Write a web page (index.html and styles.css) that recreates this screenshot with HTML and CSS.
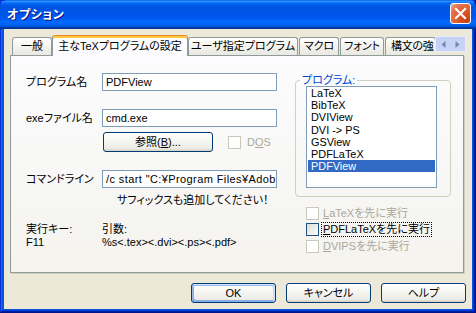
FILE: index.html
```html
<!DOCTYPE html>
<html lang="ja">
<head>
<meta charset="utf-8">
<title>オプション</title>
<link rel="stylesheet" href="styles.css">
</head>
<body>
<div class="window">
  <div class="titlebar">
    <span class="title">オプション</span>
    <span class="close" aria-label="閉じる">
      <svg width="19" height="19" viewBox="0 0 19 19"><path d="M5 5 L14 14 M14 5 L5 14" stroke="#fff" stroke-width="2.2" stroke-linecap="square" fill="none"/></svg>
    </span>
  </div>
  <div class="client">
    <div class="tabs">
      <div class="tab-list">
        <div class="tab tab-general">一般</div>
        <div class="tab tab-selected tab-main">主なTeXプログラムの設定</div>
        <div class="tab tab-user">ユーザ指定プログラム</div>
        <div class="tab tab-macro">マクロ</div>
        <div class="tab tab-font">フォント</div>
        <div class="tab tab-syntax">構文の強</div>
      </div>
      <div class="tab-scroll">
        <span class="scroll-btn"><svg width="5" height="7" viewBox="0 0 5 7"><path d="M4.5 0 L0.5 3.5 L4.5 7 Z" fill="#7489B8"/></svg></span>
        <span class="scroll-btn"><svg width="5" height="7" viewBox="0 0 5 7"><path d="M0.5 0 L4.5 3.5 L0.5 7 Z" fill="#7489B8"/></svg></span>
      </div>
    </div>
    <div class="panel">
      <div class="left">
        <div class="field">
          <span class="label">プログラム名</span>
          <div class="edit">PDFView</div>
        </div>
        <div class="field field-exe">
          <span class="label">exeファイル名</span>
          <div class="edit">cmd.exe</div>
        </div>
        <div class="browse-row">
          <span class="btn btn-browse">参照(<u>B</u>)...</span>
          <span class="check check-dos disabled"><span class="box"></span><span class="check-text">D<u>O</u>S</span></span>
        </div>
        <div class="field field-cmd">
          <span class="label">コマンドライン</span>
          <div class="edit edit-cmd">/c start "C:¥Program Files¥Adob</div>
        </div>
        <div class="hint">サフィックスも追加してください！</div>
        <div class="info">
          <div class="info-key">
            <div>実行キー:</div>
            <div>F11</div>
          </div>
          <div class="info-args">
            <div>引数:</div>
            <div>%s&lt;.tex&gt;&lt;.dvi&gt;&lt;.ps&gt;&lt;.pdf&gt;</div>
          </div>
        </div>
      </div>
      <div class="right">
        <fieldset class="group">
          <legend>プログラム:</legend>
          <ul class="listbox">
            <li>LaTeX</li>
            <li>BibTeX</li>
            <li>DVIView</li>
            <li>DVI -&gt; PS</li>
            <li>GSView</li>
            <li>PDFLaTeX</li>
            <li class="selected">PDFView</li>
          </ul>
        </fieldset>
        <div class="checks">
          <div class="check disabled"><span class="box"></span><span class="check-text"><u>L</u>aTeXを先に実行</span></div>
          <div class="check"><span class="box box-enabled"></span><span class="check-text focus"><u>P</u>DFLaTeXを先に実行</span></div>
          <div class="check disabled"><span class="box"></span><span class="check-text"><u>D</u>VIPSを先に実行</span></div>
        </div>
      </div>
    </div>
    <div class="buttons">
      <span class="btn btn-dialog btn-default">OK</span>
      <span class="btn btn-dialog">キャンセル</span>
      <span class="btn btn-dialog">ヘルプ</span>
    </div>
  </div>
</div>
</body>
</html>
```

FILE: styles.css
```css
html, body {
  margin: 0;
  padding: 0;
}

body {
  width: 476px;
  height: 313px;
  overflow: hidden;
  background: #0855DD;
}

.window {
  width: 476px;
  height: 313px;
  display: flex;
  flex-direction: column;
  background: #0855DD;
  box-shadow: inset -1px -1px #00138C, inset 1px 1px #0831D9, inset -2px -2px #001EA0, inset 2px 2px #166AEE, inset -3px -3px #003BDA, inset 3px 3px #0855DD;
  font-family: "Liberation Sans", "Noto Sans CJK JP", sans-serif;
  font-size: 11px;
  font-feature-settings: "palt";
  color: #000;
}

/* ---------- title bar ---------- */
.titlebar {
  height: 29px;
  flex: none;
  display: flex;
  align-items: center;
  padding: 0 5px 0 7px;
  box-sizing: border-box;
  background: linear-gradient(180deg, #0058EE 0%, #3593FF 4%, #288EFF 6%, #127DFF 8%, #036FFC 10%, #0262EE 14%, #0057E5 20%, #0054E3 24%, #0055EB 56%, #005BF5 66%, #026AFE 76%, #0062EF 86%, #0052D6 92%, #0040AB 94%, #003092 100%);
  border-radius: 7px 7px 0 0;
}

.title {
  color: #fff;
  font-family: "Noto Sans CJK JP", sans-serif;
  font-weight: bold;
  font-size: 12px;
  line-height: 16px;
  letter-spacing: 0.6px;
  text-shadow: 1px 1px 0 #0F1089;
  padding-bottom: 1px;
}

.close {
  margin-left: auto;
  width: 21px;
  height: 21px;
  box-sizing: border-box;
  border: 1px solid #fff;
  border-radius: 3px;
  background: radial-gradient(circle at 85% 85%, #C93E12 0%, #DD5B2C 45%, #E57452 75%, #F2B09A 100%);
  display: flex;
  align-items: center;
  justify-content: center;
  margin-top: -2px;
}

.close svg {
  display: block;
}

/* ---------- client ---------- */
.client {
  flex: 1;
  margin: 0 4px 4px 4px;
  background: #ECE9D8;
  padding: 6px 6px 0 6px;
  display: flex;
  flex-direction: column;
}

/* ---------- tabs ---------- */
.tabs {
  display: flex;
  align-items: flex-end;
  height: 20px;
  position: relative;
  z-index: 1;
}

.tab-list {
  display: flex;
  align-items: flex-end;
  width: 423px;
  margin-left: 2px;
  overflow: hidden;
  height: 21px;
  align-self: flex-start;
}

.tab {
  flex: none;
  box-sizing: border-box;
  height: 18px;
  border: 1px solid #919B9C;
  border-bottom: none;
  border-radius: 3px 3px 0 0;
  background: linear-gradient(180deg, #FFFFFF 0%, #F3F3EF 50%, #E9E8E2 100%);
  text-align: center;
  line-height: 16px;
  white-space: nowrap;
  overflow: hidden;
  margin-bottom: 1px;
}

.tab-selected {
  height: 21px;
  margin-bottom: 0;
  background: #FCFCFE;
  border-top: 1px solid #E68B2C;
  box-shadow: inset 0 2px 0 #FFC73C;
  line-height: 20px;
}

.tab-general { width: 40px; }
.tab-main { width: 136px; }
.tab-user { width: 110px; }
.tab-macro { width: 40px; margin-left: 1px; }
.tab-font { width: 44px; margin-left: 1px; }
.tab-syntax { width: 51px; margin-left: 1px; text-align: left; padding-left: 5px; letter-spacing: -0.3px; }

.tab-scroll {
  flex: none;
  display: flex;
  width: 31px;
  height: 16px;
  margin-bottom: 3px;
  background: #C7D3F4;
  border: 1px solid #E6ECFB;
  box-sizing: border-box;
}

.scroll-btn {
  flex: 1;
  display: flex;
  align-items: center;
  justify-content: center;
}

.scroll-btn svg {
  display: block;
}

/* ---------- panel ---------- */
.panel {
  flex: none;
  width: 454px;
  height: 218px;
  box-sizing: border-box;
  border: 1px solid #919B9C;
  background: linear-gradient(180deg, #FCFCFE 0%, #F4F3EE 100%);
  box-shadow: 1px 1px 0 #D0CEBF;
  display: flex;
}

.left {
  width: 284px;
  padding: 17px 0 0 15px;
  box-sizing: border-box;
}

.field {
  display: flex;
  align-items: center;
  height: 18px;
}

.field-exe {
  margin-top: 18px;
}

.field-cmd {
  margin-top: 18px;
}

.label {
  width: 76px;
  flex: none;
  line-height: 14px;
  white-space: nowrap;
}

.edit {
  width: 175px;
  height: 18px;
  box-sizing: border-box;
  border: 1px solid #7F9DB9;
  background: #fff;
  padding: 0 0 0 3px;
  line-height: 16px;
  white-space: nowrap;
  overflow: hidden;
}

.edit-cmd {
  letter-spacing: 0.4px;
}

.browse-row {
  display: flex;
  align-items: center;
  margin-top: 5px;
  height: 20px;
}

.btn {
  box-sizing: border-box;
  display: flex;
  align-items: center;
  justify-content: center;
  border: 1px solid #003C74;
  border-radius: 3px;
  background: linear-gradient(180deg, #FFFFFF 0%, #F6F6F3 40%, #ECEBE6 85%, #D6D0C5 100%);
  line-height: 14px;
  white-space: nowrap;
}

.btn-browse {
  width: 110px;
  height: 20px;
  margin-left: 77px;
}

.btn-default {
  box-shadow: inset -1px 1px #CEE7FF, inset 1px 2px #98B8EA, inset -2px 2px #BCD4F6, inset 1px -1px #89ADE4, inset 2px -2px #89ADE4;
}

.check {
  display: flex;
  align-items: center;
  white-space: nowrap;
  line-height: 13px;
}

.check-dos {
  margin-left: 15px;
}

.box {
  flex: none;
  width: 13px;
  height: 13px;
  box-sizing: border-box;
  border: 1px solid #CAC8BB;
  background: #fff;
  margin-right: 4px;
}

.box-enabled {
  border-color: #1C5180;
  background: linear-gradient(135deg, #DCDCD7 0%, #F4F4F1 70%, #FFFFFF 100%);
}

.disabled {
  color: #ACA899;
}

.hint {
  margin: 5px 0 0 91px;
  line-height: 14px;
  white-space: nowrap;
}

.info {
  display: flex;
  margin-top: 16px;
  line-height: 12.5px;
}

.info-key {
  width: 76px;
  flex: none;
}

.info-args {
  white-space: nowrap;
}

/* ---------- right column ---------- */
.right {
  flex: 1;
  padding: 18px 0 0 0;
  box-sizing: border-box;
}

.group {
  width: 156px;
  box-sizing: border-box;
  margin: 0;
  padding: 0 10px 8px 10px;
  border: 1px solid #D0D0BF;
  border-radius: 4px;
  min-inline-size: 0;
}

.group legend {
  padding: 0 2px;
  margin-left: -6px;
  color: #0046D5;
  line-height: 12px;
}

.listbox {
  list-style: none;
  margin: 0;
  padding: 0;
  width: 131px;
  height: 102px;
  box-sizing: border-box;
  border: 1px solid #7F9DB9;
  background: #fff;
  font-size: 10.9px;
}

.listbox li {
  height: 12.2px;
  line-height: 12.2px;
  padding-left: 3px;
  margin: 0 1px;
  white-space: nowrap;
}

.listbox .selected {
  background: #316AC5;
  color: #fff;
}

.checks {
  padding: 8px 0 0 11px;
}

.checks .check {
  height: 16.5px;
}

.checks .box {
  margin-right: 2px;
}

.check-text {
  padding: 0 1px;
  border: 1px solid transparent;
}

.focus {
  border: 1px dotted #000;
}

/* ---------- dialog buttons ---------- */
.buttons {
  display: flex;
  justify-content: flex-end;
  gap: 10px;
  margin-top: 10px;
}

.btn-dialog {
  width: 85px;
  height: 20px;
}
```
